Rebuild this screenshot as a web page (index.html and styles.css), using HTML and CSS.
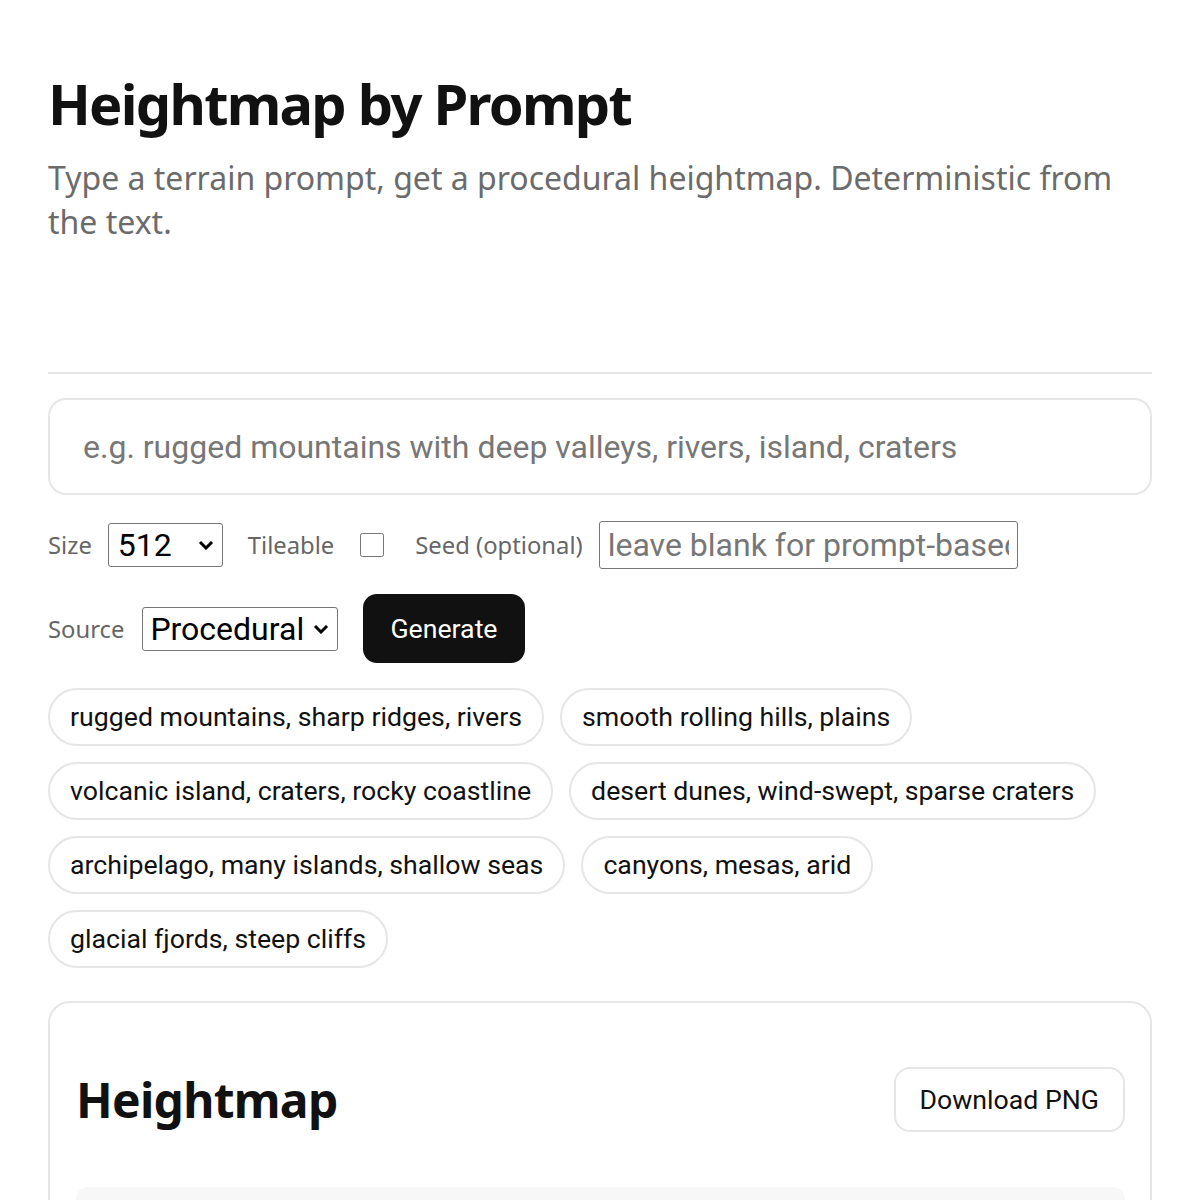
FILE: index.html
```html
<!DOCTYPE html>
<html lang="en">
<head>
    <meta charset="UTF-8">
    <meta name="viewport" content="width=device-width, initial-scale=1.0">
    <title>Heightmap by Prompt</title>
    <link rel="stylesheet" href="styles.css">
</head>
<body>
    <main class="page">
        <header class="page-head">
            <h1>Heightmap by Prompt</h1>
            <p class="lead">Type a terrain prompt, get a procedural heightmap. Deterministic from the text.</p>
        </header>

        <section class="controls">
            <input type="text" class="prompt-input" placeholder="e.g. rugged mountains with deep valleys, rivers, island, craters">

            <div class="row">
                <div class="field">
                    <label class="field-label" for="size">Size</label>
                    <select id="size" class="select size-select">
                        <option>512</option>
                        <option>256</option>
                        <option>1024</option>
                    </select>
                </div>
                <div class="field">
                    <label class="field-label" for="tile">Tileable</label>
                    <input type="checkbox" id="tile" class="tile-check">
                </div>
                <div class="field">
                    <label class="field-label" for="seed">Seed (optional)</label>
                    <input type="text" id="seed" class="seed-input" placeholder="leave blank for prompt-based">
                </div>
            </div>

            <div class="row row-source">
                <div class="field">
                    <label class="field-label" for="source">Source</label>
                    <select id="source" class="select source-select">
                        <option>Procedural</option>
                    </select>
                </div>
                <button class="btn-primary">Generate</button>
            </div>

            <div class="chips">
                <button class="chip">rugged mountains, sharp ridges, rivers</button>
                <button class="chip">smooth rolling hills, plains</button>
                <button class="chip">volcanic island, craters, rocky coastline</button>
                <button class="chip">desert dunes, wind-swept, sparse craters</button>
                <button class="chip">archipelago, many islands, shallow seas</button>
                <button class="chip">canyons, mesas, arid</button>
                <button class="chip">glacial fjords, steep cliffs</button>
            </div>
        </section>

        <section class="card">
            <div class="card-head">
                <h2>Heightmap</h2>
                <button class="btn-outline">Download PNG</button>
            </div>
            <div class="preview"></div>
        </section>
    </main>
</body>
</html>
```

FILE: styles.css
```css
* {
    margin: 0;
    padding: 0;
    box-sizing: border-box;
}

body {
    font-family: 'Noto Sans', sans-serif;
    background: #fff;
    color: #111;
}

.page {
    padding: 48px;
}

/* Header */
.page-head {
    padding-top: 22px;
    padding-bottom: 128px;
    border-bottom: 2px solid #e6e6e6;
}

.page-head h1 {
    font-size: 56px;
    font-weight: 700;
    letter-spacing: -0.031em;
    line-height: 1.2;
}

.lead {
    margin-top: 19px;
    font-size: 32px;
    line-height: 44px;
    color: #6b6b6b;
}

/* Controls */
.controls {
    padding-top: 24px;
}

.prompt-input {
    display: block;
    width: 100%;
    height: 97px;
    padding: 0 33px;
    border: 2px solid #e6e6e6;
    border-radius: 18px;
    font-family: Roboto, sans-serif;
    font-size: 32px;
    color: #111;
    outline: none;
}

.prompt-input::placeholder,
.seed-input::placeholder {
    color: #777;
}

.row {
    display: flex;
    align-items: center;
    gap: 25px;
    margin-top: 26px;
}

.row-source {
    margin-top: 25px;
}

.field {
    display: flex;
    align-items: center;
    gap: 16px;
}

.field-label {
    font-size: 23.8px;
    color: #666;
}

.select {
    appearance: none;
    -webkit-appearance: none;
    height: 44px;
    font-family: Roboto, sans-serif;
    font-size: 32px;
    color: #000;
    background-color: #fff;
    background-image: url("data:image/svg+xml;utf8,<svg xmlns='http://www.w3.org/2000/svg' width='16' height='10' viewBox='0 0 16 10'><polyline points='2,2 8,8 14,2' fill='none' stroke='black' stroke-width='3'/></svg>");
    background-repeat: no-repeat;
    background-position: right 8px center;
    border: 1.5px solid #767676;
    border-radius: 3px;
}

.size-select {
    width: 115px;
    padding-left: 9px;
}

.source-select {
    width: 196px;
    margin-left: 2px;
    padding-left: 7px;
}

.tile-check {
    width: 24px;
    height: 24px;
    margin: 0 6px 0 10px;
}

.seed-input {
    width: 419px;
    height: 48px;
    padding: 0 8px;
    font-family: Roboto, sans-serif;
    font-size: 32px;
    border: 1.5px solid #767676;
    border-radius: 3px;
}

.btn-primary {
    height: 69px;
    padding: 0 27px;
    background: #111;
    color: #fff;
    border: none;
    border-radius: 14px;
    font-family: Roboto, sans-serif;
    font-size: 26.7px;
    cursor: pointer;
}

/* Preset chips */
.chips {
    display: flex;
    flex-wrap: wrap;
    gap: 16px;
    margin-top: 25px;
}

.chip {
    height: 58px;
    padding: 0 20px;
    background: #fff;
    border: 2px solid #e6e6e6;
    border-radius: 999px;
    font-family: Roboto, sans-serif;
    font-size: 26.7px;
    color: #111;
    cursor: pointer;
}

/* Result card */
.card {
    margin-top: 33px;
    padding: 64px 25px 0 26px;
    border: 2px solid #e6e6e6;
    border-radius: 22px;
}

.card-head {
    display: flex;
    align-items: center;
    justify-content: space-between;
}

.card-head h2 {
    font-size: 48px;
    font-weight: 700;
    letter-spacing: -0.015em;
}

.btn-outline {
    height: 65px;
    padding: 0 24px;
    background: #fff;
    border: 2px solid #e6e6e6;
    border-radius: 16px;
    font-family: Roboto, sans-serif;
    font-size: 26.7px;
    color: #111;
    cursor: pointer;
}

.preview {
    margin-top: 55px;
    height: 400px;
    background: #f7f7f7;
    border-radius: 12px;
}
```
